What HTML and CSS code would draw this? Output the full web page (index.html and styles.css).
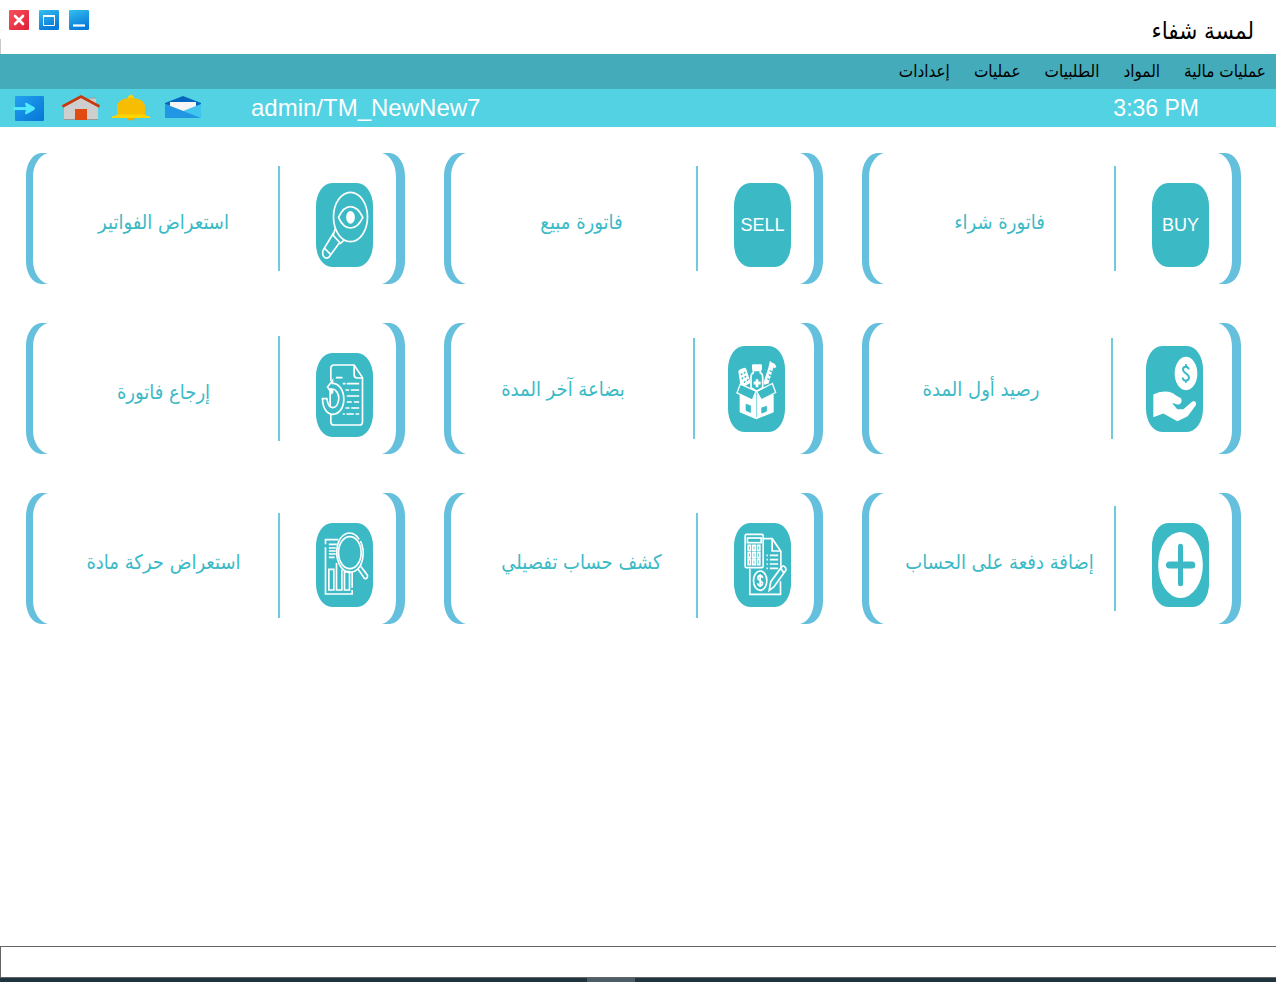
FILE: index.html
```html
<!DOCTYPE html>
<html lang="ar" dir="rtl">
<head>
<meta charset="utf-8">
<meta name="viewport" content="width=device-width, initial-scale=1">
<title>لمسة شفاء</title>
<link rel="stylesheet" href="styles.css">
</head>
<body class="app">
<header class="titlebar">
  <h1 class="titlebar-name">لمسة شفاء</h1>
  <div class="window-controls">
    <button class="window-button" type="button" aria-label="إغلاق">
      <svg viewBox="0 0 20 20"><defs><linearGradient id="red" x1="0" y1="0" x2="1" y2="1"><stop offset="0" stop-color="#f9525d"/><stop offset="1" stop-color="#de1f36"/></linearGradient><linearGradient id="blue" x1="0" y1="0" x2="0.4" y2="1"><stop offset="0" stop-color="#34bff0"/><stop offset="1" stop-color="#087ad8"/></linearGradient></defs><rect width="20" height="20" rx="1" fill="url(#red)"/><path d="M6 6l8 8M14 6l-8 8" stroke="#fff" stroke-width="2.6" stroke-linecap="round"/></svg>
    </button>
    <button class="window-button" type="button" aria-label="تكبير">
      <svg viewBox="0 0 20 20"><rect width="20" height="20" rx="1" fill="url(#blue)"/><path d="M4.5 6v9.500h11V6" fill="none" stroke="#fff"/><path d="M4 6h12" stroke="#fff" stroke-width="2"/></svg>
    </button>
    <button class="window-button" type="button" aria-label="تصغير">
      <svg viewBox="0 0 20 20"><rect width="20" height="20" rx="1" fill="url(#blue)"/><path d="M4 15.500h12" stroke="#fff" stroke-width="2.200"/></svg>
    </button>
  </div>
</header>
<nav class="menu">
  <a class="menu-item" href="#finance">عمليات مالية</a>
  <a class="menu-item" href="#items">المواد</a>
  <a class="menu-item" href="#orders">الطلبيات</a>
  <a class="menu-item" href="#operations">عمليات</a>
  <a class="menu-item" href="#settings">إعدادات</a>
</nav>
<div class="toolbar" dir="ltr">
  <div class="tools">
    <button class="tool" type="button" aria-label="خروج">
      <svg viewBox="0 0 40 28"><defs><linearGradient id="exit" x1="0" y1="0" x2="1" y2="1"><stop offset="0" stop-color="#23a1f0"/><stop offset="1" stop-color="#0675d5"/></linearGradient></defs><rect x="6" y="2" width="29" height="25" rx="1" fill="url(#exit)"/><path d="M5 13h12l-1-3q0-2 2-1l7 4q2 1.500 0 3l-7 4q-2 1-2-1l1-3H5q-2-1.500 0-3z" fill="#4fe8ff"/></svg>
    </button>
    <button class="tool" type="button" aria-label="الرئيسية">
      <svg viewBox="0 0 40 28"><path d="M30 4h6v9h-6z" fill="#ccc"/><path d="M30 4h6" stroke="#999"/><path d="M4 12L21 2l17 10v14H4z" fill="#cecece"/><path d="M4 25.500h34" stroke="#999"/><rect x="15" y="15" width="12" height="11" fill="#df4b10"/><path d="M2.500 12.500L21 2.500l18.500 10" fill="none" stroke="#c9380b" stroke-width="2.800"/></svg>
    </button>
    <button class="tool" type="button" aria-label="التنبيهات">
      <svg viewBox="0 0 40 28"><circle cx="20" cy="4" r="3" fill="#ffd109"/><path d="M16 24h8q-1 2.500-4 2.500T16 24z" fill="#e8ad00"/><path d="M6 22v-9C6 7 12 4 20 4s14 3 14 9v9z" fill="#f6bd02"/><path d="M1 22.500q5-1 5-2h28q0 1 5 2v1.500H1z" fill="#ffd500"/></svg>
    </button>
    <button class="tool" type="button" aria-label="الرسائل">
      <svg viewBox="0 0 40 28"><path d="M3 9L21 2l18 7v14H3z" fill="#0568bf"/><path d="M8 8h26v10H8z" fill="#f5f5f5"/><path d="M3 10l18 7 18-7v14H3z" fill="#40c5ef"/><path d="M3 10l36 14H3z" fill="#2196e3"/></svg>
    </button>
  </div>
  <span class="account">admin/TM_NewNew7</span>
  <time class="clock" datetime="15:36">3:36 PM</time>
</div>
<svg class="shapes" aria-hidden="true">
  <symbol id="bracket-end" viewBox="0 0 23 131"><path d="M0 0H8C17 1 23 11 23 23v85c0 12-6 22-15 23H0c8-2 14-11 14-24V24C14 11 8 2 0 0z"/></symbol>
  <symbol id="bracket-start" viewBox="0 0 23 131"><path d="M22 0H15C6 1 0 11 0 23v85c0 12 6 22 15 23h7C14 129 7 120 7 107V24C7 11 14 2 22 0z"/></symbol>
</svg>
<main class="cards">
  <button class="card" type="button">
    <svg class="bracket"><use href="#bracket-end"/></svg>
    <span class="tile">BUY</span>
    <span class="divider"></span>
    <span class="label">فاتورة شراء</span>
    <svg class="bracket"><use href="#bracket-start"/></svg>
  </button>
  <button class="card" type="button">
    <svg class="bracket"><use href="#bracket-end"/></svg>
    <span class="tile">SELL</span>
    <span class="divider"></span>
    <span class="label">فاتورة مبيع</span>
    <svg class="bracket"><use href="#bracket-start"/></svg>
  </button>
  <button class="card" type="button">
    <svg class="bracket"><use href="#bracket-end"/></svg>
    <span class="tile"><svg class="icon line" viewBox="48 128 170 252"><ellipse cx="151" cy="230" rx="51" ry="74"/><path d="M115 231q15-32 36-32t37 32q-15 32-37 32t-36-32z"/><ellipse cx="151" cy="231" rx="13" ry="19" class="solid"/><path d="M105 265l-6 20 22 24 10-9M100 278L69 329c-5 17 5 29 17 22l32-44M74 325l18 18"/></svg></span>
    <span class="divider"></span>
    <span class="label">استعراض الفواتير</span>
    <svg class="bracket"><use href="#bracket-start"/></svg>
  </button>

  <button class="card raised" type="button">
    <svg class="bracket"><use href="#bracket-end"/></svg>
    <span class="tile"><svg class="icon" viewBox="108 108 171 257"><ellipse cx="228" cy="190" rx="34" ry="50" class="solid"/><path d="M236 178c-1-11-17-11-17 0s18 12 18 24-19 13-19 0M228 162v10M228 208v10" fill="none" stroke="#3bbac6" stroke-width="6"/><path class="solid" d="M130 253q20-11 45-8c15 2 24 14 36 18 7 6 4 20-6 20-8 1-12-5-18-3l15 17h18l27-23c8-3 14 3 10 12l-24 32-31 15-42-23-30 11z"/></svg></span>
    <span class="divider"></span>
    <span class="label">رصيد أول المدة</span>
    <svg class="bracket"><use href="#bracket-start"/></svg>
  </button>
  <button class="card raised" type="button">
    <svg class="bracket"><use href="#bracket-end"/></svg>
    <span class="tile"><svg class="icon" viewBox="114 108 171 257"><path class="solid" d="M145 184q0-6 20-11 4 1 5 7l12 38-22 13-9-8zM186 166q0-4 4-4h22q4 0 4 4v11q0 4-4 4h-22q-4 0-4-4zM240 152l5 5 9 4 5 8-4 5-5-2-14 48-13 4-2-8 14-43z"/><path d="M190 181v7q-7 3-7 13v32l17 10 18-10v-32q0-10-7-13v-7z" fill="#3bbac6" stroke="#fff" stroke-width="5"/><path class="solid" d="M197 207h8v7h7v9h-7v8h-8v-8h-6v-9h6z"/><path class="solid" d="M149 252l38 17 12-23 14 23 38-17v54l-52 21-50-21z"/><path d="M151 222l47 21-11 27-46-22zM247 220l-47 24 14 25 43-22z" fill="#3bbac6" stroke="#fff" stroke-width="4"/><path d="M200 248v73M168 282l14 5v20l-14-6zM230 288l-15 5v16l15-6z" fill="#3bbac6" stroke="#3bbac6" stroke-width="2"/><path d="M153 195l4-5M162 190l4-5M155 207l4-5M164 202l4-5M162 218l4-5M171 212l4-5M232 205l7 4M236 193l7 4M239 181l7 4" stroke="#3bbac6" stroke-width="4"/></svg></span>
    <span class="divider"></span>
    <span class="label">بضاعة آخر المدة</span>
    <svg class="bracket"><use href="#bracket-start"/></svg>
  </button>
  <button class="card" type="button">
    <svg class="bracket"><use href="#bracket-end"/></svg>
    <span class="tile"><svg class="icon line" viewBox="48 128 170 252"><path d="M92 212v-38q0-10 10-10h60l25 38v132q0 10-9 10h-76q-10 0-10-10v-23M162 166v28q0 9 9 9h16M107 202h20M128 220h8M140 220h37M136 239h11M152 239h25M140 257h37M140 275h15M161 275h16M136 293h12M153 293h24M128 311h6M139 311h22M166 311h11"/><path d="M97 211l-15 19 12 17v-11c13-1 22 14 22 29-2 18-10 28-19 27-9 0-14-8-17-27H67c1 30 14 47 31 47 20 0 33-21 33-45 0-27-14-48-34-48z" fill="#3bbac6"/><path d="M90 234v54M97 236v12"/></svg></span>
    <span class="divider"></span>
    <span class="label">إرجاع فاتورة</span>
    <svg class="bracket"><use href="#bracket-start"/></svg>
  </button>

  <button class="card" type="button">
    <svg class="bracket"><use href="#bracket-end"/></svg>
    <span class="tile"><svg class="icon" viewBox="156 129 170 252"><ellipse cx="241" cy="255" rx="67" ry="99" class="solid"/><path d="M241 199v112" stroke="#3bbac6" stroke-width="15" stroke-linecap="round"/><path d="M208 255h67" stroke="#3bbac6" stroke-width="21" stroke-linecap="round"/></svg></span>
    <span class="divider"></span>
    <span class="label">إضافة دفعة على الحساب</span>
    <svg class="bracket"><use href="#bracket-start"/></svg>
  </button>
  <button class="card low" type="button">
    <svg class="bracket"><use href="#bracket-end"/></svg>
    <span class="tile"><svg class="icon line" viewBox="132 129 170 252"><path d="M220 176h26l26 38v46M246 178v35h26M179 266v77h92v-39"/><rect x="165" y="163" width="54" height="100" rx="4"/><rect x="172" y="174" width="41" height="14"/><path d="M174 196h7v15h-7zM188 196h7v15h-7zM202 196h7v15h-7zM174 218h7v15h-7zM188 218h7v15h-7zM202 218h7v15h-7zM174 239h7v15h-7zM188 239h7v15h-7zM202 239h7v15h-7z"/><path d="M229 226h4M239 226h25M229 239h4M239 239h25M229 252h4M239 252h25M229 265h4M239 265h25"/><ellipse cx="210" cy="302" rx="20" ry="29"/><path d="M217 294c-1-10-14-9-14 0s14 7 14 16-14 10-14 0M210 283v38"/><path d="M237 331l5-26 33-45q5-5 10 2t0 12l-34 47zM271 264l10 14"/></svg></span>
    <span class="divider"></span>
    <span class="label">كشف حساب تفصيلي</span>
    <svg class="bracket"><use href="#bracket-start"/></svg>
  </button>
  <button class="card low" type="button">
    <svg class="bracket"><use href="#bracket-end"/></svg>
    <span class="tile"><svg class="icon line" viewBox="48 129 170 252"><path d="M76 193v-14h38M76 202v140h80v-12M156 275v48M86 193h24M86 204h21M86 213h21M86 222h21M86 232h17M86 268h15v62H86zM109 249v81h16v-61M133 275h15v55h-15z"/><path d="M181 183c16 33 7 79-18 91-33 14-56-25-53-65 5-51 45-66 67-31"/><ellipse cx="149" cy="218" rx="34" ry="48"/><path d="M172 265l20 29q6 5 9-1t-1-10l-19-25"/></svg></span>
    <span class="divider"></span>
    <span class="label">استعراض حركة مادة</span>
    <svg class="bracket"><use href="#bracket-start"/></svg>
  </button>
</main>
<input class="status" type="text" aria-label="الحالة">
<div class="taskbar"><span class="taskbar-active"></span></div>
</body>
</html>
```
FILE: styles.css
```css
* {
  box-sizing: border-box;
}

.app {
  display: flex;
  flex-direction: column;
  min-height: 100vh;
  margin: 0;
  background: #fff;
  font-family: "DejaVu Sans Condensed", "DejaVu Sans", sans-serif;
}

button {
  padding: 0;
  border: 0;
  background: none;
  font: inherit;
  cursor: pointer;
}

svg {
  display: block;
}

.titlebar {
  display: flex;
  justify-content: space-between;
  align-items: flex-start;
  height: 54px;
  padding: 10px 22px 0 9px;
  background: linear-gradient(#c8c8c8, #c8c8c8) left bottom / 1px 15px no-repeat;
}

.titlebar-name {
  margin: 0;
  padding-top: 4px;
  font-size: 24px;
  font-weight: 200;
  line-height: 34px;
}

.window-controls {
  display: flex;
  flex-direction: row-reverse;
  gap: 10px;
}

.window-button {
  width: 20px;
  height: 20px;
}

.menu {
  display: flex;
  align-items: center;
  gap: 24px;
  height: 35px;
  padding: 0 10px;
  background: #43abba;
}

.menu-item {
  color: #000;
  font-size: 17px;
  line-height: 35px;
  text-decoration: none;
}

.toolbar {
  display: flex;
  align-items: center;
  height: 38px;
  padding: 0 77px 0 9px;
  background: #52d2e2;
  color: #fff;
  font-family: "Liberation Sans", Arial, sans-serif;
  font-size: 24px;
}

.tools {
  display: flex;
  gap: 11px;
}

.tool {
  width: 40px;
  height: 28px;
}

.account {
  margin-left: 49px;
}

.clock {
  margin-left: auto;
  font-size: 23px;
}

.shapes {
  position: absolute;
  width: 0;
  height: 0;
}

.cards {
  display: grid;
  grid-template-columns: repeat(3, 1fr);
  align-content: start;
  gap: 39px;
  flex: 1;
  padding: 26px 35px 26px 26px;
}

.card {
  display: flex;
  align-items: center;
  height: 131px;
  color: #3bbac6;
}

.bracket {
  flex: none;
  width: 23px;
  height: 131px;
  fill: #65c0dd;
}

.tile {
  display: flex;
  flex: none;
  align-items: center;
  justify-content: center;
  width: 57px;
  height: 84px;
  margin: 13px 9px 0 36px;
  border-radius: 16px / 23px;
  background: #3bbac6;
  color: #fff;
  font-family: "Liberation Sans", Arial, sans-serif;
  font-size: 18px;
}

.icon {
  width: 57px;
  height: 84px;
}

.line {
  fill: none;
  stroke: #fff;
  stroke-width: 5px;
}

.solid {
  fill: #fff;
  stroke: none;
}

.divider {
  flex: none;
  width: 2px;
  height: 105px;
  background: #6dcbdb;
}

.label {
  flex: 1;
  padding-top: 6px;
  font-size: 20px;
  white-space: nowrap;
}

.raised .tile {
  height: 86px;
  margin: 0 15px 0 33px;
}

.raised .icon {
  height: 86px;
}

.raised .divider {
  height: 101px;
}

.raised .label {
  padding: 0 34px 0 0;
}

.low .divider {
  margin-top: 14px;
}

.status {
  height: 32px;
  padding: 0 8px;
  border: 1px solid #646464;
  border-right: 0;
  border-radius: 0;
  background: #fff;
  font: inherit;
}

.taskbar {
  height: 4px;
  background: #20343f;
}

.taskbar-active {
  display: block;
  width: 48px;
  height: 4px;
  margin: 0 auto 0 46%;
  background: #4d5e66;
}
```
